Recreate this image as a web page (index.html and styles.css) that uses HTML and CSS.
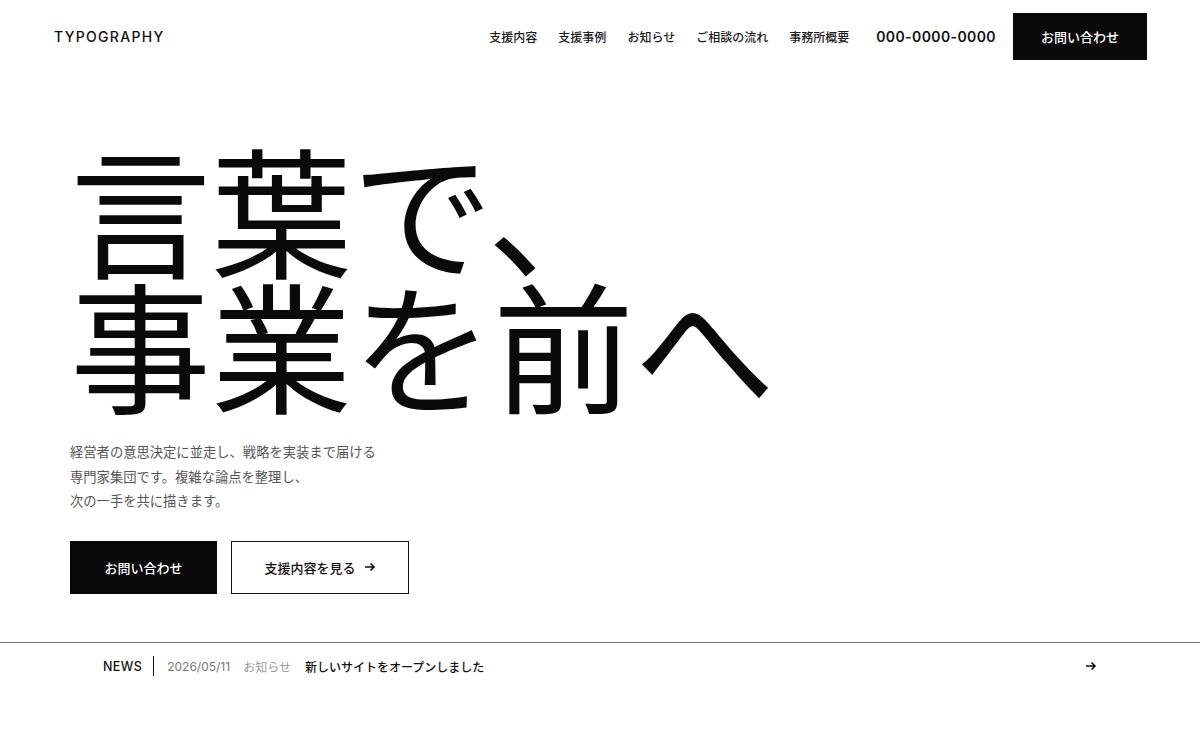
FILE: index.html
```html
<!DOCTYPE html>
<html lang="ja">
<head>
<meta charset="utf-8">
<title>TYPOGRAPHY</title>
<link rel="stylesheet" href="styles.css">
</head>
<body>
<header class="site-header">
  <div class="logo">TYPOGRAPHY</div>
  <nav class="nav">
    <a class="nav-link" href="#">支援内容</a>
    <a class="nav-link" href="#">支援事例</a>
    <a class="nav-link" href="#">お知らせ</a>
    <a class="nav-link" href="#">ご相談の流れ</a>
    <a class="nav-link" href="#">事務所概要</a>
    <span class="tel">000-0000-0000</span>
    <a class="header-cta" href="#">お問い合わせ</a>
  </nav>
</header>
<main class="hero">
  <h1 class="hero-title"><span class="hero-line">言葉で、</span><span class="hero-line">事業を前へ</span></h1>
  <p class="hero-lead">経営者の意思決定に並走し、戦略を実装まで届ける<br>専門家集団です。複雑な論点を整理し、<br>次の一手を共に描きます。</p>
  <div class="hero-actions">
    <a class="btn btn-primary" href="#">お問い合わせ</a>
    <a class="btn btn-outline" href="#">支援内容を見る
      <svg class="btn-arrow" width="12" height="12" viewBox="0 0 12 12"><path d="M1 6h9M6.5 2.5 10 6l-3.5 3.5" fill="none" stroke="#111" stroke-width="1.6"/></svg>
    </a>
  </div>
</main>
<section class="news-bar">
  <div class="news-inner">
    <span class="news-label">NEWS</span>
    <span class="news-sep"></span>
    <span class="news-date">2026/05/11</span>
    <span class="news-cat">お知らせ</span>
    <span class="news-title">新しいサイトをオープンしました</span>
    <svg class="news-arrow" width="12" height="12" viewBox="0 0 12 12"><path d="M1 6h9M6.5 2.5 10 6l-3.5 3.5" fill="none" stroke="#111" stroke-width="1.6"/></svg>
  </div>
</section>
</body>
</html>
```
FILE: styles.css
```css
* { box-sizing: border-box; }
html, body { margin: 0; padding: 0; background: #fff; }
body {
  font-family: "Noto Sans CJK JP", "Noto Sans", sans-serif;
  color: #111;
}
a { color: inherit; text-decoration: none; }

.site-header {
  height: 73px;
  padding: 0 53px 0 54px;
  display: flex;
  align-items: center;
  justify-content: space-between;
}
.logo {
  font-family: "Inter", "Noto Sans", sans-serif;
  font-size: 14px;
  font-weight: 500;
  letter-spacing: 1.3px;
  color: #111;
}
.nav {
  display: flex;
  align-items: center;
}
.nav-link {
  font-size: 12px;
  font-weight: 500;
  margin-left: 21px;
  color: #1a1a1a;
}
.nav-link:first-child { margin-left: 0; }
.tel {
  font-family: "Inter", "Noto Sans", sans-serif;
  font-size: 14px;
  font-weight: 600;
  letter-spacing: 0.4px;
  margin-left: 27px;
}
.header-cta {
  margin-left: 17px;
  width: 134px;
  height: 47px;
  background: #0a0a0a;
  color: #fff;
  font-size: 13px;
  font-weight: 500;
  display: flex;
  align-items: center;
  justify-content: center;
}

.hero {
  padding: 66px 0 0 70px;
}
.hero-title {
  margin: 0;
  font-size: 141px;
  font-weight: 400;
  line-height: 135px;
  letter-spacing: 0;
  color: #0a0a0a;
}
.hero-line {
  display: block;
  height: 135px;
}
.hero-lead {
  margin: 31px 0 0;
  font-size: 13.3px;
  line-height: 24.5px;
  color: #555;
}
.hero-actions {
  margin-top: 27px;
  display: flex;
  gap: 14px;
}
.btn {
  height: 53px;
  display: flex;
  align-items: center;
  justify-content: center;
  font-size: 13px;
  font-weight: 500;
}
.btn-primary {
  width: 147px;
  background: #0a0a0a;
  color: #fff;
}
.btn-outline {
  width: 178px;
  border: 1px solid #111;
  color: #111;
  gap: 8px;
}
.btn-arrow { display: block; }

.news-bar {
  margin-top: 48px;
  border-top: 1.5px solid #777;
}
.news-inner {
  height: 47px;
  padding: 0 103px;
  display: flex;
  align-items: center;
  font-size: 12px;
}
.news-label {
  font-family: "Inter", "Noto Sans", sans-serif;
  font-size: 12.5px;
  font-weight: 500;
  letter-spacing: 0.4px;
  color: #111;
}
.news-sep {
  width: 1px;
  height: 20px;
  background: #111;
  margin: 0 13px 0 11px;
}
.news-date {
  font-family: "Inter", "Noto Sans", sans-serif;
  color: #777;
  margin-right: 13px;
}
.news-cat {
  color: #999;
  margin-right: 14px;
}
.news-title {
  color: #111;
  font-weight: 500;
}
.news-arrow {
  margin-left: auto;
  display: block;
}
```
